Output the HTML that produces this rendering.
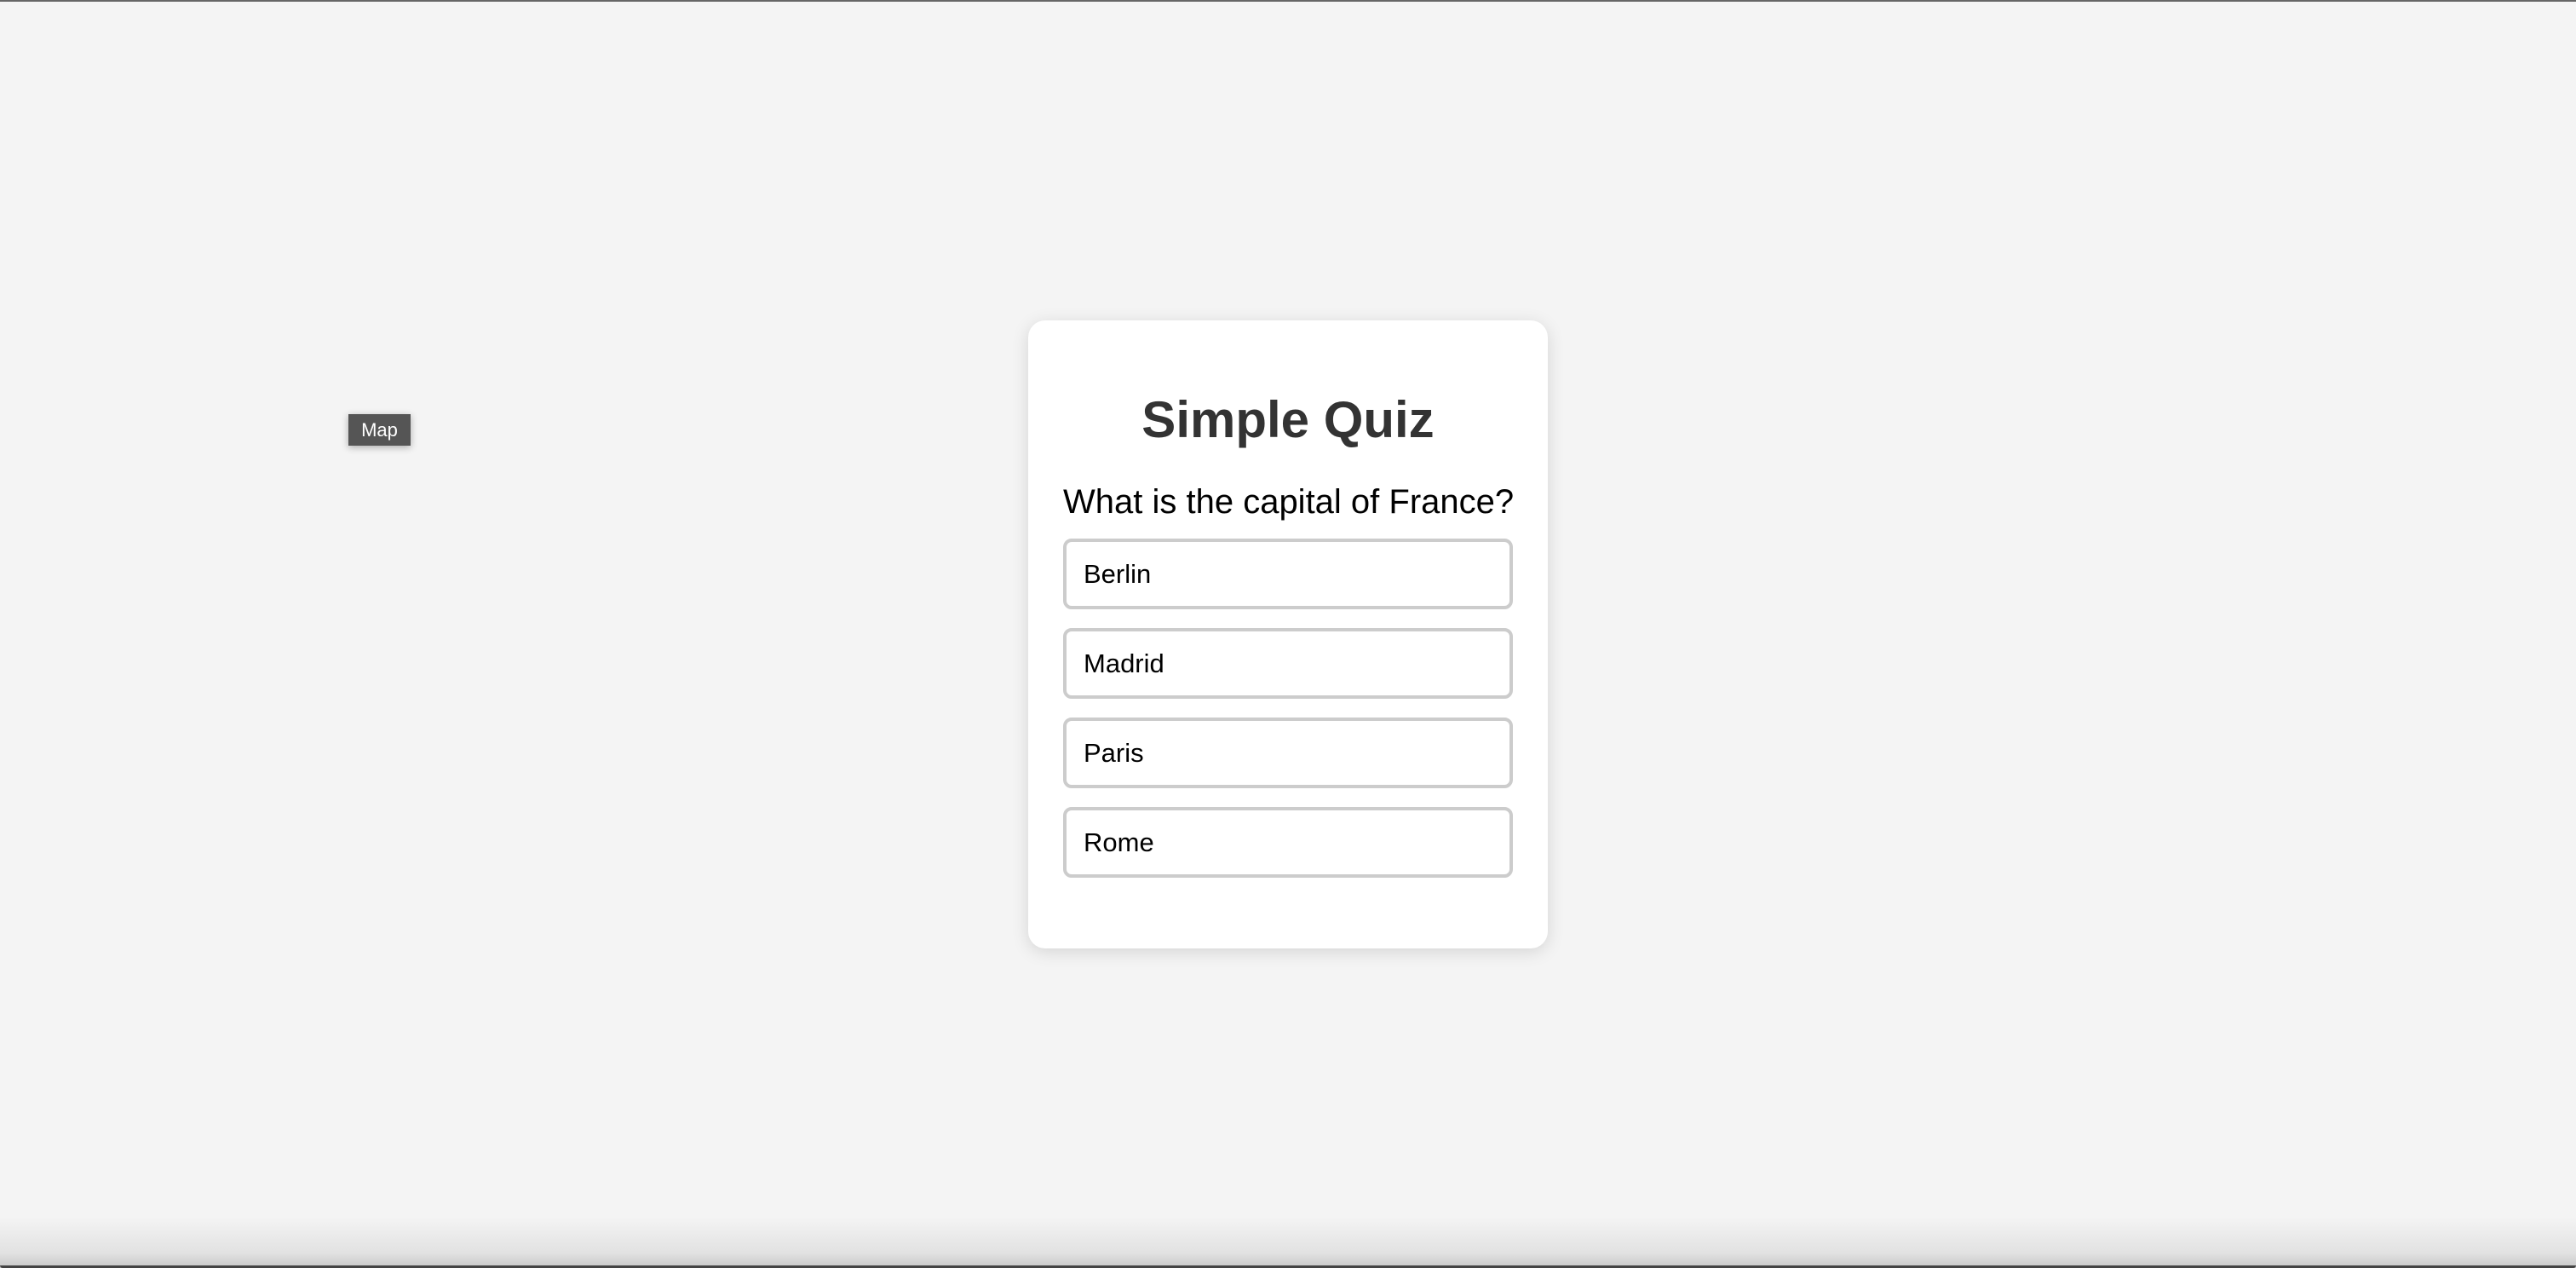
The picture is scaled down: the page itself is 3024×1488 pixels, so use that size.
<!DOCTYPE html>
<html><head><style>
html,body{margin:0;padding:0;width:3024px;height:1488px;overflow:hidden;background:#f4f4f4;font-family:"Liberation Sans",Arial,sans-serif;position:relative}
.top{position:absolute;left:0;top:0;width:3024px;height:2px;background:#666}
.bot{position:absolute;left:0;bottom:0;width:3024px;height:60px;background:linear-gradient(#f4f4f4,#e2e2e2 70%,#c8c8c8);}
.botline{position:absolute;left:0;bottom:0;width:3024px;height:3px;background:#444;border-radius:0 0 20px 20px}
.card{position:absolute;left:1207px;top:376px;width:610px;height:737px;background:#fff;border-radius:20px;box-shadow:0 4px 20px rgba(0,0,0,0.13)}
.title{position:absolute;left:0;width:610px;text-align:center;font-size:60px;font-weight:bold;color:#333;line-height:70px;top:82px}
.q{position:absolute;left:41px;top:190px;font-size:40px;line-height:46px;color:#000}
.opt{position:absolute;left:41px;width:520px;height:75px;border:4px solid #ccc;border-radius:10px;box-sizing:content-box;font-size:31px;line-height:75px}
.opt span{position:absolute;left:20px;top:0px}
.map{position:absolute;left:409px;top:486px;width:73px;height:37px;background:#555;color:#fff;font-size:22px;line-height:37px;text-align:center;box-shadow:0 2px 8px rgba(0,0,0,0.3)}
</style></head><body>
<div class="top"></div>
<div class="bot"></div>
<div class="botline"></div>
<div class="map">Map</div>
<div class="card">
<div class="title">Simple Quiz</div>
<div class="q">What is the capital of France?</div>
<div class="opt" style="top:256px"><span>Berlin</span></div>
<div class="opt" style="top:361px"><span>Madrid</span></div>
<div class="opt" style="top:466px"><span>Paris</span></div>
<div class="opt" style="top:571px"><span>Rome</span></div>
</div>
</body></html>
